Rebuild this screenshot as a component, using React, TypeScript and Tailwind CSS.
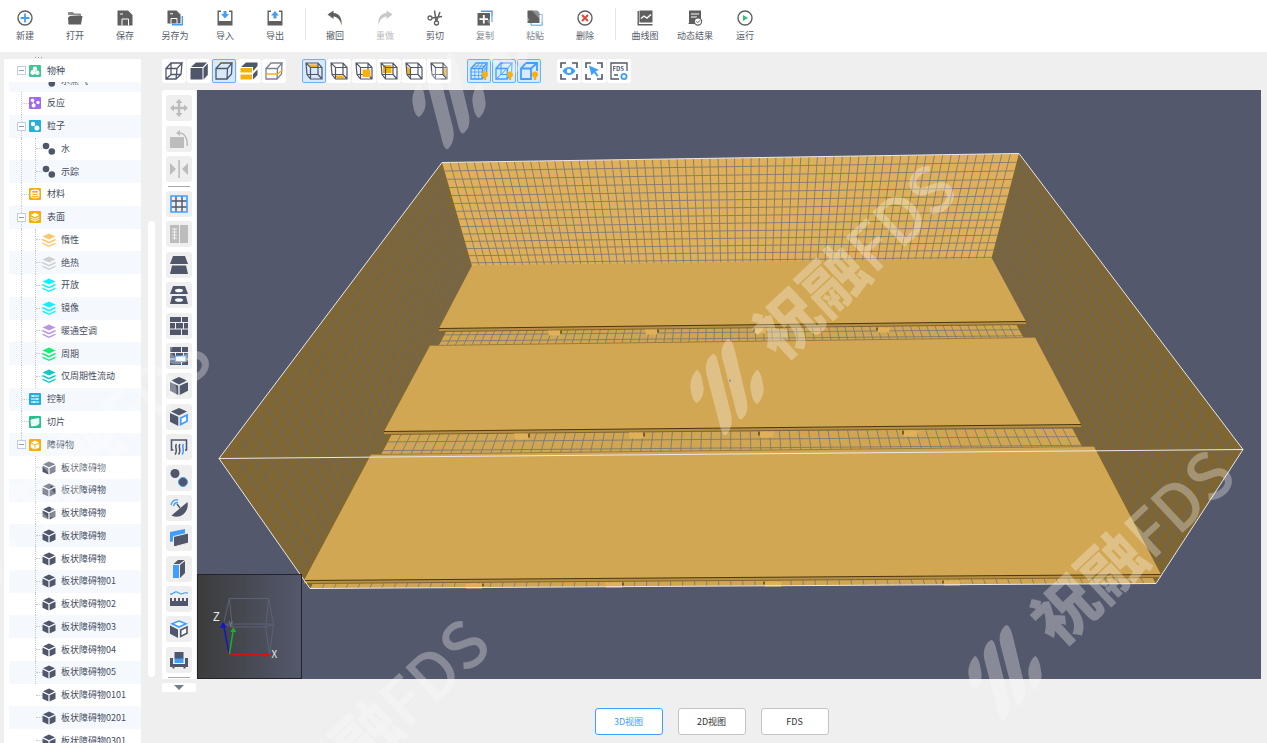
import { useState } from "react";
import type { ReactNode } from "react";
import clsx from "clsx";

const DARK = "#50576b";
const BLUE = "#409eff";
const AMBER = "#f8b10c";
const GREY = "#5f5f5f";
const MUTED = "#bcbcbc";

type Point = [number, number];
type Quad = [Point, Point, Point, Point];

function Icon({ size = 18, children }: { size?: number; children: ReactNode }) {
  return (
    <svg width={size} height={size} viewBox={`0 0 ${size} ${size}`} fill="none" aria-hidden="true" className="shrink-0">
      {children}
    </svg>
  );
}

/* ---------- top menu ---------- */

type MenuItem = { label: string; icon: ReactNode; disabled?: boolean };

const menuGroups: MenuItem[][] = [
  [
    {
      label: "新建",
      icon: (
        <>
          <circle cx="8" cy="8" r="7" stroke={GREY} strokeWidth="1.4" />
          <path d="M8 3.6v8.8M3.6 8h8.8" stroke={BLUE} strokeWidth="1.8" />
        </>
      ),
    },
    {
      label: "打开",
      icon: (
        <>
          <path d="M1.5 5V2.500h4.500L7.500 4h6v2" fill="#8a8a8a" stroke="#8a8a8a" />
          <path d="M3 6H15.500L14 14.500H1.500L1 7.500z" fill={GREY} />
        </>
      ),
    },
    {
      label: "保存",
      icon: (
        <>
          <path d="M0.5 0.5H11L15.5 5V15.5H0.5z" fill={GREY} />
          <path d="M5 15.5V9H11.5V15.5M3 4H6" stroke="#fff" strokeWidth="1" />
        </>
      ),
    },
    {
      label: "另存为",
      icon: (
        <>
          <path d="M5 14.8H15.3V6" stroke={BLUE} strokeWidth="1.4" />
          <path d="M0.5 0.5H9.5L13.5 4.5V13.5H0.5z" fill={GREY} />
          <path d="M4 13.5V8.5H10V13.5M3 3.8H6" stroke="#fff" strokeWidth="1" />
        </>
      ),
    },
    {
      label: "导入",
      icon: (
        <>
          <path d="M4 1.2H1.2V14.8H14.8V1.2H12" stroke={GREY} strokeWidth="1.4" />
          <path d="M1 11H15V15H1z" fill={GREY} />
          <path d="M6.500 1H9.5V4H12L8 8.5L4 4H6.5z" fill={BLUE} />
        </>
      ),
    },
    {
      label: "导出",
      icon: (
        <>
          <path d="M4 1.2H1.2V14.8H14.8V1.2H12" stroke={GREY} strokeWidth="1.4" />
          <path d="M1 11H15V15H1z" fill={GREY} />
          <path d="M6.5 8.5H9.5V5.5H12L8 1L4 5.5H6.5z" fill={BLUE} />
        </>
      ),
    },
  ],
  [
    { label: "撤回", icon: <path d="M0.5 4.5L6.5 0.5V3C12 3 15.5 8 14.5 15.5C13.5 10.5 11 7 6.5 6.5V9z" fill={GREY} /> },
    {
      label: "重做",
      disabled: true,
      icon: <path d="M15.5 4.5L9.5 0.5V3C4 3 0.5 8 1.5 15.5C2.5 10.5 5 7 9.5 6.5V9z" fill="#c8c8c8" />,
    },
    {
      label: "剪切",
      icon: (
        <>
          <circle cx="3" cy="8" r="2" stroke={GREY} strokeWidth="1.3" />
          <circle cx="9.5" cy="13" r="2" stroke={GREY} strokeWidth="1.3" />
          <path d="M5 8L15 6.500M9 11L7.500 0.5M9.5 11L13 2" stroke={GREY} strokeWidth="1.5" />
        </>
      ),
    },
    {
      label: "复制",
      icon: (
        <>
          <path d="M4 1.2H15V12" stroke={BLUE} strokeWidth="1.4" />
          <path d="M0.5 3H13V15.5H0.5z" fill={GREY} />
          <path d="M6.8 5V13.5M2.5 9.2H11" stroke="#fff" strokeWidth="1.8" />
        </>
      ),
    },
    {
      label: "粘贴",
      icon: (
        <>
          <path d="M4 4.5H15.2V15.2H4z" stroke={BLUE} strokeWidth="1" />
          <path d="M0.5 0.5H10L12.5 2.5V13H0.5z" fill={GREY} />
        </>
      ),
    },
    {
      label: "删除",
      icon: (
        <>
          <circle cx="8" cy="8" r="7" stroke={GREY} strokeWidth="1.4" />
          <path d="M5 5L11 11M11 5L5 11" stroke="#dd4b39" strokeWidth="2" />
        </>
      ),
    },
  ],
  [
    {
      label: "曲线图",
      icon: (
        <>
          <path d="M1.2 1V14.8H15.5" stroke={GREY} strokeWidth="1.4" />
          <path d="M2.5 0.5H15.5V12.5H2.5z" fill={GREY} />
          <path d="M4 8.500L7 6L10 8L14 4.500" stroke="#fff" strokeWidth="1.4" />
        </>
      ),
    },
    {
      label: "动态结果",
      icon: (
        <>
          <path d="M2 0.5H14V8L8 14H2z" fill={GREY} />
          <path d="M4 4H12M4 7H10" stroke="#fff" strokeWidth="1.2" />
          <circle cx="11" cy="11.5" r="3.6" fill="#fff" stroke={GREY} strokeWidth="1.2" />
          <path d="M9.3 11.5L10.7 12.8L13 10.3M1.5 13.5H5.5" stroke={GREY} strokeWidth="1" />
        </>
      ),
    },
    {
      label: "运行",
      icon: (
        <>
          <circle cx="8" cy="8" r="7" stroke={GREY} strokeWidth="1.4" />
          <path d="M6 5L11 8L6 11z" fill="#2fc56d" />
        </>
      ),
    },
  ],
];

function MenuBar() {
  return (
    <header className="flex h-[52px] shrink-0 bg-white">
      {menuGroups.map((group, index) => (
        <div key={index} className="flex">
          {index > 0 ? <span className="mt-2 mr-1 ml-[5px] h-8 w-px bg-[#e4e4e4]" /> : null}
          {group.map((item) => (
            <button
              key={item.label}
              type="button"
              disabled={item.disabled}
              className={clsx(
                "flex w-[50px] flex-col items-center gap-[3px] pt-[10px] text-[9px] leading-[14px] whitespace-nowrap",
                item.disabled ? "text-[#bdbdbd]" : "text-[#555a68]",
              )}
            >
              <Icon size={16}>{item.icon}</Icon>
              {item.label}
            </button>
          ))}
        </div>
      ))}
    </header>
  );
}

/* ---------- tree ---------- */

const layers = (color: string) => (
  <g fill={color}>
    <path d="M7 0.5L13.5 3.5L7 6.5L0.5 3.5z" />
    <path d="M0.5 5.800L7 8.800L13.5 5.800V7.600L7 10.600L0.5 7.600z" />
    <path d="M0.5 9.400L7 12.400L13.5 9.400V11L7 14L0.5 11z" />
  </g>
);

const block = (
  <g fill={DARK}>
    <path d="M7 0.5L13 3.3L7 6.2L1 3.3z" />
    <path d="M0.5 4.5L6.4 7.3V13.6L0.5 10.8z" />
    <path d="M13.5 4.5L7.6 7.3V13.6L13.5 10.8z" />
  </g>
);

const particles = (
  <g fill={DARK}>
    <circle cx="4" cy="4" r="3.3" />
    <circle cx="9.8" cy="9.5" r="3.3" />
  </g>
);

const badge = (color: string, mark: ReactNode) => (
  <>
    <rect width="12" height="12" rx="1" fill={color} />
    {mark}
  </>
);

const badges = {
  species: badge(
    "#3cc892",
    <g fill="#fff">
      <circle cx="6" cy="3.8" r="2.2" />
      <circle cx="3.8" cy="7.5" r="2.4" />
      <circle cx="8.3" cy="7.8" r="2.2" />
    </g>,
  ),
  reaction: badge(
    "#a168f0",
    <g fill="#fff">
      <circle cx="3.5" cy="3.3" r="1.8" />
      <circle cx="4.6" cy="8.5" r="2" />
      <circle cx="9" cy="5.5" r="1.7" />
      <path d="M3.5 3.500L5 8" stroke="#fff" />
    </g>,
  ),
  particle: badge(
    "#25aed6",
    <g fill="#fff">
      <circle cx="4" cy="4" r="2.2" />
      <circle cx="7.9" cy="8" r="2.5" />
    </g>,
  ),
  material: badge(
    "#f8ae07",
    <g stroke="#fff" strokeWidth="1.2">
      <ellipse cx="6" cy="3.7" rx="3.8" ry="1.6" />
      <path d="M2.200 3.7V8.500C3.5 10.500 8.5 10.500 9.800 8.5V3.7M2.200 6C4 8.300 8 8.300 9.800 6" />
    </g>,
  ),
  surface: badge(
    "#f8ae07",
    <g fill="#fff">
      <path d="M6 1.8L10.3 4L6 6.2L1.7 4z" />
      <path d="M1.7 6L6 8.2L10.3 6M1.7 8L6 10.2L10.3 8" stroke="#fff" fill="none" />
    </g>,
  ),
  control: badge("#25aed6", <path d="M2 3H10M2 6H10M2 9H10M4 2V4M8 5V7M5 8V10" stroke="#fff" strokeWidth="1.1" />),
  slice: badge("#27bf8a", <path d="M2 4L4 3.500L9.800 2.500V7.500L8.500 9L2.500 10z" fill="#e9fff6" stroke="#fff" />),
  obstacle: badge(
    "#f8ae07",
    <g fill="#fff">
      <path d="M6 1.5L10 3.5L6 5.5L2 3.5z" />
      <path d="M1.8 4.5L5.6 6.3V10.4L1.8 8.5zM10.2 4.5L6.4 6.3V10.4L10.2 8.5z" />
    </g>,
  ),
};

type TreeRow = { label: string; icon: ReactNode; child?: boolean; open?: boolean; trunk?: boolean; branch?: boolean };

const child = (label: string, icon: ReactNode, trunk = true, branch = true): TreeRow => ({
  label,
  icon,
  child: true,
  trunk,
  branch,
});

const treeRows: TreeRow[] = [
  { label: "反应", icon: badges.reaction, trunk: true },
  { label: "粒子", icon: badges.particle, open: true, trunk: true },
  child("水", particles),
  child("示踪", particles),
  { label: "材料", icon: badges.material, trunk: true },
  { label: "表面", icon: badges.surface, open: true, trunk: true },
  child("惰性", layers("#fcc76e")),
  child("绝热", layers("#cfcfcf")),
  child("开放", layers("#10f0ff")),
  child("镜像", layers("#10f0ff")),
  child("暖通空调", layers("#bd94e4")),
  child("周期", layers("#10f070")),
  child("仅周期性流动", layers("#12c8c8")),
  { label: "控制", icon: badges.control, trunk: true },
  { label: "切片", icon: badges.slice, trunk: true },
  { label: "障碍物", icon: badges.obstacle, open: true },
  ...["", "", "", "", "", "01", "02", "03", "04", "05"].map((n) => child(`板状障碍物${n}`, block, false)),
  ...["0101", "0201", "0301"].map((n) => child(`板状障碍物${n}`, block, false, false)),
];

function Toggle({ above = true, below }: { above?: boolean; below?: boolean }) {
  return (
    <span className="mr-[3px] ml-2 flex h-full w-[9px] flex-col items-center">
      <span className={clsx("flex-1 border-l border-dotted", above ? "border-[#c4c8d0]" : "border-transparent")} />
      <button type="button" aria-label="收起" className="flex size-[9px] items-center justify-center border border-[#c3cde0] bg-white">
        <span className="h-px w-[5px] bg-[#8f9bb5]" />
      </button>
      <span className={clsx("flex-1 border-l border-dotted", below ? "border-[#c4c8d0]" : "border-transparent")} />
    </span>
  );
}

function TreeItem({ row, index }: { row: TreeRow; index: number }) {
  const line = "border-[#c4c8d0]";

  return (
    <li className={clsx("flex items-center", index % 2 === 1 ? "bg-[#f5f9fe]" : "bg-white")}>
      {row.child ? (
        <>
          <span className={clsx("ml-3 h-full w-[14px] border-l border-dotted", row.trunk ? line : "border-transparent")} />
          <span className={clsx("flex h-full w-[7px] items-center border-l border-dotted", row.branch ? line : "border-transparent")}>
            <span className={clsx("w-full border-t border-dotted", line)} />
          </span>
        </>
      ) : row.open ? (
        <Toggle below={row.trunk} />
      ) : (
        <span className={clsx("ml-3 flex h-full w-2 items-center border-l border-dotted", line)}>
          <span className={clsx("w-full border-t border-dotted", line)} />
        </span>
      )}
      <Icon size={row.child ? 14 : 12}>{row.icon}</Icon>
      <a href="#" className={clsx("whitespace-nowrap", row.child ? "ml-[5px]" : "ml-[6px]")}>
        {row.label}
      </a>
    </li>
  );
}

function Sidebar() {
  return (
    <aside className="ml-1 flex w-[137px] shrink-0 flex-col">
      <div className="flex h-[7px] shrink-0 items-end gap-[2px] pb-px pl-[31px]">
        <span className="size-px bg-[#999]" />
        <span className="size-px bg-[#999]" />
        <span className="size-px bg-[#999]" />
      </div>
      <div className="flex min-h-0 flex-1 flex-col overflow-hidden bg-white pl-[5px] text-[9px] leading-[14px] text-[#454c60]">
        <div className="flex h-[23px] shrink-0 items-center">
          <Toggle above={false} />
          <Icon size={12}>{badges.species}</Icon>
          <span className="ml-[6px]">物种</span>
        </div>
        <div className="flex h-[10px] shrink-0 items-end overflow-hidden bg-[#f5f9fe] pl-[33px]">
          <div className="flex h-[23px] shrink-0 items-center gap-[5px]">
            <Icon size={14}>{particles}</Icon>
            <span>水蒸气</span>
          </div>
        </div>
        <ul className="grid h-[660px] shrink-0 auto-rows-fr">
          {treeRows.map((row, index) => (
            <TreeItem key={index} row={row} index={index} />
          ))}
        </ul>
      </div>
    </aside>
  );
}

/* ---------- view toolbar ---------- */

const wire = (
  <path
    d="M1 6.5H12L11 17H1zM1 6.5L6 1H17L12 6.5M17 1L16 12.5L11 17M6 1V12.5H16M6 12.5L1 17"
    stroke={DARK}
    strokeWidth="1.3"
  />
);
const shell = (color: string) => (
  <path d="M1 6.5H12.5L12 17H1zM1 6.5L6 1H17L12.5 6.5M17 1L16.500 12L12 17" stroke={color} strokeWidth="1.3" />
);
const frame = (
  <path
    d="M1 1H13L17 5.5V17H5.5L2 12.5zM1 1L5.5 5.5H17M5.5 5.5V17M13 1V12.5H2M13 12.5L17 17"
    stroke={DARK}
    strokeWidth="1.2"
  />
);
const bulb = (
  <g fill={AMBER}>
    <circle cx="15" cy="12.5" r="3" />
    <path d="M13.8 14H16.2V18H13.8z" />
  </g>
);
const brackets = <path d="M1 6V1H6M12 1H17V6M17 12V17H12M6 17H1V12" stroke={DARK} strokeWidth="1.6" />;

type ViewTool = { name: string; icon: ReactNode; active?: boolean };

const viewGroups: ViewTool[][] = [
  [
    { name: "线框", icon: wire },
    {
      name: "实体",
      icon: <path d="M0.5 6H12.5V17.5H0.5zM1 5L6 0.5H17L12.8 5zM13.5 6L17.8 1.5V13L13.5 17.5z" fill={DARK} />,
    },
    { name: "轮廓", icon: shell(DARK), active: true },
    {
      name: "切面",
      icon: (
        <>
          <path d="M1 5L6 0.5H17.5V4L13 9V5zM13 12L17.5 7.5V13L13 17.5z" fill={DARK} />
          <path d="M0.5 6H12V10.5H0.5zM0.5 12.5H12V17.5H0.5z" fill={AMBER} />
        </>
      ),
    },
    {
      name: "截面线",
      icon: (
        <>
          {shell("#7d8291")}
          <path d="M0.5 12H12.5L17.5 8" stroke={AMBER} strokeWidth="1.4" />
        </>
      ),
    },
  ],
  [
    { name: "顶视图", icon: <><path d="M3.5 2.5H12.5L14 5H6z" fill={AMBER} />{frame}</>, active: true },
    { name: "底视图", icon: <><path d="M5 13.5H12.5L15 16.5H7z" fill={AMBER} />{frame}</> },
    { name: "前视图", icon: <>{frame}<path d="M7.5 7.5H15.5V15H7.5z" fill={AMBER} /></> },
    { name: "后视图", icon: <><path d="M3 3H11.5V11H3z" fill={AMBER} />{frame}</> },
    { name: "左视图", icon: <><path d="M2 4L5 7V15L2.5 12z" fill={AMBER} />{frame}</> },
    { name: "右视图", icon: <><path d="M13.5 4L16.5 7V15L13.5 12z" fill={AMBER} />{frame}</> },
  ],
  [
    {
      name: "网格",
      active: true,
      icon: (
        <>
          {shell(BLUE)}
          <path
            d="M4.8 6.5V17M8.6 6.5V17M1 10H12.5L17 5M1 13.5H12.5M3 4H14.5M9.5 1L5 6.5M13 1L9 6.5M14.8 4V14"
            stroke={BLUE}
            strokeWidth="0.8"
          />
          {bulb}
        </>
      ),
    },
    {
      name: "网格线",
      active: true,
      icon: (
        <>
          {shell(BLUE)}
          <path d="M6 1V12.5L1 17M6 12.5L12 6.500M6 12.5H12" stroke={BLUE} strokeWidth="1" />
          {bulb}
        </>
      ),
    },
    {
      name: "边界",
      active: true,
      icon: (
        <>
          <path d="M1 6.5H11V17H1zM1 6.5L6 1H17L11 6.5M17 1V9" stroke={BLUE} strokeWidth="1.8" />
          {bulb}
        </>
      ),
    },
  ],
  [
    {
      name: "显示",
      icon: (
        <>
          {brackets}
          <path d="M2.500 9C6 3.500 12 3.500 15.500 9C12 14.500 6 14.500 2.500 9z" fill={BLUE} />
          <circle cx="9" cy="9" r="2.2" fill="#fff" />
        </>
      ),
    },
    {
      name: "选择",
      icon: (
        <>
          {brackets}
          <path d="M4 3.5L14 8L10.5 9.5L13.5 13.5L12 14.8L9 10.8L6.5 13.5z" fill={BLUE} />
        </>
      ),
    },
    {
      name: "FDS",
      icon: (
        <>
          <path d="M1 9V1H17V9M1 8V17H9M4 13H8" stroke={DARK} strokeWidth="1.3" />
          <text x="2.5" y="9" fontSize="6" fontWeight="700" fill={DARK}>
            FDS
          </text>
          <circle cx="14" cy="14.5" r="2.6" stroke={BLUE} strokeWidth="1.8" />
        </>
      ),
    },
  ],
];

function ViewToolbar() {
  return (
    <div className="flex h-6 shrink-0 gap-4">
      {viewGroups.map((group, index) => (
        <div key={index} className="flex gap-px">
          {group.map((tool) => (
            <button
              key={tool.name}
              type="button"
              aria-label={tool.name}
              aria-pressed={Boolean(tool.active)}
              className={clsx(
                "flex size-6 items-center justify-center rounded-[2px] border",
                tool.active ? "border-[#6bb0f7] bg-[#d8e9fb]" : "border-white bg-white",
              )}
            >
              <Icon>{tool.icon}</Icon>
            </button>
          ))}
        </div>
      ))}
    </div>
  );
}

/* ---------- drawing tools ---------- */

const bigCube = (
  <g fill={DARK}>
    <path d="M9 0L17 3.5L9 7.5L1 3.5z" />
    <path d="M0 5L8.3 8.8V18L0 13.8z" />
  </g>
);

const bricks = (
  <path
    d="M0 0H11V5H0zM12 0H18V5H12zM0 6H5V11.500H0zM6 6H13V11.500H6zM14 6H18V11.500H14zM0 12.500H11V18H0zM12 12.500H18V18H12z"
    fill={DARK}
  />
);

const editTools: ViewTool[] = [
  {
    name: "移动",
    icon: (
      <>
        <path d="M9 3V15M3 9H15" stroke={MUTED} strokeWidth="2.4" />
        <path d="M9 0L12.5 4H5.5zM9 18L5.5 14H12.5zM0 9L4 5.5V12.5zM18 9L14 12.5V5.5z" fill={MUTED} />
      </>
    ),
  },
  {
    name: "旋转",
    icon: (
      <>
        <rect y="7" width="14" height="11" rx="1" fill={MUTED} />
        <path d="M9 3C14 3 17.3 6 17.3 16" stroke={MUTED} strokeWidth="1.4" />
        <path d="M6 3L10 0V6z" fill={MUTED} />
      </>
    ),
  },
  { name: "镜像", icon: <path d="M0 3L6 9L0 15zM18 3L12 9L18 15zM8.3 0H9.9V18H8.3z" fill={MUTED} /> },
];

const drawTools: ViewTool[] = [
  {
    name: "网格",
    icon: (
      <>
        <path d="M6 1V17M12 1V17M1 6H17M1 12H17" stroke={DARK} strokeWidth="1.4" />
        <path d="M1 1H17V17H1z" stroke={BLUE} strokeWidth="1.6" />
      </>
    ),
  },
  {
    name: "分割",
    icon: (
      <>
        <path d="M0 0H9V18H0zM10 0H18V18H10z" fill={MUTED} />
        <path d="M4.5 3V15M2 4H7M2 7H7M2 10H7M2 13H7" stroke="#eee" />
      </>
    ),
  },
  { name: "通风口", icon: <path d="M3 0H15L18 8H0zM2 9.500H16L18 18H0z" fill={DARK} /> },
  {
    name: "开孔",
    icon: (
      <>
        <path d="M3 0H15L18 8H0zM2 10H16L18 18H0z" fill={DARK} />
        <ellipse cx="9" cy="4.5" rx="4" ry="1.8" fill="#fff" />
        <ellipse cx="9" cy="14" rx="4" ry="1.8" fill="#fff" />
      </>
    ),
  },
  { name: "墙体", icon: bricks },
  {
    name: "墙洞",
    icon: (
      <>
        {bricks}
        <path d="M5.5 9H16V14.5H5.5z" fill="#fff" stroke={BLUE} strokeWidth="1.2" />
      </>
    ),
  },
  {
    name: "障碍物",
    icon: (
      <>
        {bigCube}
        <path d="M18 5L9.7 8.8V18L18 13.8z" fill={DARK} />
      </>
    ),
  },
  {
    name: "孔洞",
    icon: (
      <>
        {bigCube}
        <path d="M17 7L10.7 10V16.5L17 13.3z" fill="#fff" stroke={BLUE} strokeWidth="1.8" />
      </>
    ),
  },
  {
    name: "暖通",
    icon: (
      <>
        <path d="M3.500 12H1.500V2H16.500V12H15" stroke={DARK} strokeWidth="1.6" />
        <path d="M6.500 6C4 9 8.500 12 5 16.500M10 6C7.500 9 12 12 8.500 16.500" stroke={DARK} strokeWidth="1.5" />
        <path d="M13.500 6C11 9 15.500 12 12 16.500" stroke={BLUE} strokeWidth="1.5" />
      </>
    ),
  },
  {
    name: "粒子",
    icon: (
      <>
        <circle cx="5" cy="4.5" r="4.5" fill={DARK} />
        <circle cx="13" cy="13" r="4.5" fill={DARK} stroke={BLUE} />
      </>
    ),
  },
  {
    name: "探测器",
    icon: (
      <>
        <path d="M1.5 16.500L17.500 3C19.5 13 10 21 1.5 16.500z" fill={DARK} />
        <path d="M7 5L10 9" stroke={DARK} strokeWidth="1.4" />
        <path d="M1 6C2 2 5 0.5 8 1M3.5 7C4 5 5.5 3.5 8 3.5" stroke={BLUE} strokeWidth="1.4" />
      </>
    ),
  },
  {
    name: "切片",
    icon: (
      <>
        <path d="M0 3L15 0V10L0 13z" fill={BLUE} />
        <path d="M3.5 7.5L18.5 4V14L3.5 18z" fill={DARK} stroke="#efefef" />
      </>
    ),
  },
  {
    name: "区域",
    icon: (
      <>
        <path d="M3 5H9V18H3z" fill={BLUE} />
        <path d="M3.5 4L8 0H14.5L9.5 4zM10 5L15 1V13L10 18z" fill={DARK} />
      </>
    ),
  },
  {
    name: "测量",
    icon: (
      <>
        <path d="M0 8H2V11H4V8H6V11H8V8H10V11H12V8H14V11H16V8H18V16H0z" fill={DARK} />
        <path d="M0 4C3 5 4 1 7 2C10 3 10 5 13 3.5C15 2 16 3 18 3" stroke={BLUE} strokeWidth="1.2" />
      </>
    ),
  },
  {
    name: "空间",
    icon: (
      <>
        <path d="M9 1L16 3.8L9 7L2 3.8z" fill="#fff" stroke={BLUE} strokeWidth="1.6" />
        <path d="M0 5.5L8 9.5V18L0 13.8z" fill={DARK} />
        <path d="M17 7L10.7 10V16.5L17 13.3z" fill="#fff" stroke={DARK} strokeWidth="1.6" />
      </>
    ),
  },
  {
    name: "家具",
    icon: (
      <>
        <path d="M4.500 1H13.500V8H4.500zM0 7H3V13H15V7H18V16H15.500V17.500H13.500V16H4.500V17.500H2.500V16H0z" fill={DARK} />
        <path d="M4.5 7.5H13.5V12H4.5z" fill={BLUE} />
      </>
    ),
  },
];

function ToolButton({ tool }: { tool: ViewTool }) {
  return (
    <button
      type="button"
      aria-label={tool.name}
      className="flex size-[26px] shrink-0 items-center justify-center rounded-[3px] bg-[#efefef]"
    >
      <Icon>{tool.icon}</Icon>
    </button>
  );
}

function DrawingTools() {
  return (
    <div className="flex w-[34px] shrink-0 flex-col">
      <div className="flex flex-1 flex-col items-center rounded-t-[3px] bg-white pt-[5px]">
        <div className="flex h-[87px] shrink-0 flex-col justify-between">
          {editTools.map((tool) => (
            <ToolButton key={tool.name} tool={tool} />
          ))}
        </div>
        <span className="my-1 h-px w-[22px] shrink-0 bg-[#a9a9a9]" />
        <div className="flex flex-1 flex-col justify-between">
          {drawTools.map((tool) => (
            <ToolButton key={tool.name} tool={tool} />
          ))}
        </div>
        <span className="mt-1 mb-px h-px w-[22px] shrink-0 bg-[#a9a9a9]" />
      </div>
      <button
        type="button"
        aria-label="更多工具"
        className="mt-1 flex h-[9px] shrink-0 items-center justify-center rounded-[2px] bg-white"
      >
        <svg width="10" height="5" viewBox="0 0 10 5" aria-hidden="true">
          <path d="M0 0H10L5 5z" fill="#777d8c" />
        </svg>
      </button>
    </div>
  );
}

/* ---------- 3D view ---------- */

const BACK_LEFT: Point = [442, 162];
const BACK_RIGHT: Point = [1019, 153];
const FRONT_RIGHT: Point = [1243, 449];
const FRONT_LEFT: Point = [219, 458];
const FLOOR_BACK_LEFT: Point = [475, 276];
const FLOOR_BACK_RIGHT: Point = [988, 271];
const FLOOR_FRONT_RIGHT: Point = [1156, 583];
const FLOOR_FRONT_LEFT: Point = [310, 588];

const toPoints = (points: Point[]) => points.map((p) => p.join(",")).join(" ");

// Projective map from the unit square onto a quad
function project([p0, p1, p2, p3]: Quad) {
  const dx1 = p1[0] - p2[0];
  const dy1 = p1[1] - p2[1];
  const dx2 = p3[0] - p2[0];
  const dy2 = p3[1] - p2[1];
  const sx = p0[0] - p1[0] + p2[0] - p3[0];
  const sy = p0[1] - p1[1] + p2[1] - p3[1];
  const det = dx1 * dy2 - dx2 * dy1;
  const g = (sx * dy2 - dx2 * sy) / det;
  const h = (dx1 * sy - sx * dy1) / det;
  const a = p1[0] - p0[0] + g * p1[0];
  const b = p3[0] - p0[0] + h * p3[0];
  const d = p1[1] - p0[1] + g * p1[1];
  const e = p3[1] - p0[1] + h * p3[1];

  return (u: number, v: number): Point => {
    const w = g * u + h * v + 1;
    return [(a * u + b * v + p0[0]) / w, (d * u + e * v + p0[1]) / w];
  };
}

function gridPath(quad: Quad, columns: number, rows: number) {
  const at = project(quad);
  const segment = (from: Point, to: Point) =>
    `M${from[0].toFixed(1)} ${from[1].toFixed(1)}L${to[0].toFixed(1)} ${to[1].toFixed(1)}`;
  const parts: string[] = [];
  for (let i = 1; i < columns; i++) parts.push(segment(at(i / columns, 0), at(i / columns, 1)));
  for (let j = 1; j < rows; j++) parts.push(segment(at(0, j / rows), at(1, j / rows)));
  return parts.join("");
}

const faces: { quad: Quad; fill: string; line: string; columns: number; rows: number }[] = [
  {
    quad: [FLOOR_BACK_LEFT, FLOOR_BACK_RIGHT, FLOOR_FRONT_RIGHT, FLOOR_FRONT_LEFT],
    fill: "#d0a652",
    line: "#7c7a76",
    columns: 70,
    rows: 40,
  },
  {
    quad: [BACK_LEFT, FRONT_LEFT, FLOOR_FRONT_LEFT, FLOOR_BACK_LEFT],
    fill: "#806631",
    line: "#68666c",
    columns: 40,
    rows: 14,
  },
  {
    quad: [BACK_RIGHT, FRONT_RIGHT, FLOOR_FRONT_RIGHT, FLOOR_BACK_RIGHT],
    fill: "#7f6530",
    line: "#68666c",
    columns: 40,
    rows: 14,
  },
  {
    quad: [BACK_LEFT, BACK_RIGHT, FLOOR_BACK_RIGHT, FLOOR_BACK_LEFT],
    fill: "#dfb059",
    line: "#7d7a76",
    columns: 70,
    rows: 15,
  },
];

const slabs: Quad[] = [
  [[472, 265], [992, 258], [1026, 321], [439, 328]],
  [[430, 345], [1035, 337], [1081, 424], [384, 431]],
  [[371, 454], [1094, 446], [1161, 574], [304, 580]],
];

const feet = [
  { y: 330, width: 13, height: 5, xs: [548, 645, 754, 877] },
  { y: 433, width: 15, height: 6, xs: [514, 629, 759, 903] },
  { y: 583, width: 18, height: 5, xs: [465, 605, 764, 943] },
];

function Scene() {
  return (
    <svg viewBox="197 90 1064 588" className="h-full w-full" role="img" aria-label="3D视图">
      {faces.map((face, index) => (
        <g key={index}>
          <polygon points={toPoints(face.quad)} fill={face.fill} />
          <path d={gridPath(face.quad, face.columns, face.rows)} stroke={face.line} strokeWidth="0.9" fill="none" />
        </g>
      ))}
      {slabs.map((slab, index) => {
        const [, , right, left] = slab;
        return (
          <g key={index}>
            <polygon points={toPoints(slab)} fill="#d1a753" />
            <polygon points={toPoints([left, right, [right[0], right[1] + 3], [left[0], left[1] + 3]])} fill="#b58f44" />
            <path d={`M${left[0]} ${left[1]}L${right[0]} ${right[1]}`} stroke="#4b380f" />
            <path d={`M${left[0]} ${left[1] + 3}L${right[0]} ${right[1] + 3}`} stroke="#80652e" />
            {index > 0 ? <path d={`M${slab[0].join(" ")}L${slab[1].join(" ")}`} stroke="#9c7b3c" /> : null}
          </g>
        );
      })}
      {feet.map((row) =>
        row.xs.map((x, index) => {
          const y = row.y - index;
          return (
            <g key={`${row.y}-${x}`}>
              <path d={`M${x} ${y}h${row.width}l-1 ${row.height}h${2 - row.width}z`} fill="#e0b159" />
              <path
                d={index < 2 ? `M${x + row.width} ${y}v${row.height - 2}` : `M${x} ${y}v${row.height - 2}`}
                stroke="#5a4414"
                strokeWidth="1.5"
              />
            </g>
          );
        }),
      )}
      <g stroke="#e8e8ea" fill="none">
        <polygon points={toPoints([BACK_LEFT, BACK_RIGHT, FRONT_RIGHT, FRONT_LEFT])} />
        <polyline points={toPoints([FRONT_LEFT, FLOOR_FRONT_LEFT, FLOOR_FRONT_RIGHT, FRONT_RIGHT])} />
      </g>
      <path d="M729 380h2" stroke="#6a5aa8" strokeWidth="2" />
    </svg>
  );
}

function AxisGizmo() {
  return (
    <svg
      viewBox="0 0 105 105"
      aria-hidden="true"
      className="absolute bottom-0 left-0 size-[105px] border border-[#23242a] bg-linear-to-r from-[#3c3c3c] to-[#54586c]"
    >
      <path
        d="M32 24H72L77 50H26zM26 50L35 53H69L77 50M32 24L35 53M72 24L69 53L73 81L77 50"
        stroke="#5d6175"
        fill="none"
      />
      <path d="M32 81L26 51" stroke="#1414c8" strokeWidth="1.5" />
      <path d="M22 54L26 48L29 53z" fill="#1414c8" />
      <path d="M32 81L36 56" stroke="#14b428" strokeWidth="1.5" />
      <path d="M33 58L36 53L39 58z" fill="#14b428" />
      <path d="M32 81H69" stroke="#d21414" strokeWidth="1.5" />
      <path d="M68 79L74 81L68 84z" fill="#d21414" />
      <g fill="#e8e8e8">
        <text x="15" y="47" fontSize="12">Z</text>
        <text x="31" y="53" fontSize="8" fill="#8a8a90">Y</text>
        <text x="75" y="85" fontSize="10">X</text>
      </g>
    </svg>
  );
}

/* ---------- watermark ---------- */

const watermarkOffsets: Point[] = [
  [-278, -286],
  [0, 0],
  [278, 286],
  [-467, 455],
  [-745, 169],
];

function Watermark() {
  return (
    <svg className="pointer-events-none absolute inset-0 h-full w-full" aria-hidden="true" fill="#fff" opacity="0.3">
      {watermarkOffsets.map(([x, y]) => (
        <g key={`${x},${y}`} transform={`translate(${x} ${y})`}>
          <path d="M697 370C692 374 689 384 691 391C692 398 694 402 697 403C702 400 705 391 703 385C702 377 700 371 697 370z" />
          <path d="M713 354C707 357 704 366 707 376L719 422C721 431 723 436 726 435C731 430 733 423 731 414L719 366C717 358 716 354 713 354z" />
          <path d="M728 339C722 344 720 351 723 361L735 407C737 416 739 421 742 419C747 415 749 408 746 397L735 351C733 343 731 339 728 339z" />
          <path d="M757 370C752 374 749 384 751 391C752 398 754 403 757 404C762 400 765 391 763 385C762 377 760 371 757 370z" />
          <text x="780" y="363" fontSize="64" fontWeight="900" transform="rotate(-43 780 363)">
            祝融<tspan fontWeight="500">FDS</tspan>
          </text>
        </g>
      ))}
    </svg>
  );
}

const viewTabs = ["3D视图", "2D视图", "FDS"];

export default function App() {
  const [activeTab, setActiveTab] = useState("3D视图");

  return (
    <div className="relative flex h-screen flex-col overflow-hidden bg-[#efefef] font-['Noto_Sans_CJK_SC','Noto_Sans',sans-serif]">
      <MenuBar />
      <div className="flex min-h-0 flex-1">
        <Sidebar />
        <div className="mx-[7px] mt-[169px] mb-[66px] w-[7px] shrink-0 rounded-full bg-white" />
        <main className="mr-[6px] flex min-w-0 flex-1 flex-col pt-[7px]">
          <ViewToolbar />
          <div className="mt-[7px] flex min-h-0 flex-1">
            <DrawingTools />
            <section className="relative mb-[13px] ml-px min-w-0 flex-1 bg-[#54586c]">
              <Scene />
              <AxisGizmo />
            </section>
          </div>
          <div className="flex h-[51px] shrink-0 justify-center gap-[15px] pt-4">
            {viewTabs.map((tab) => (
              <button
                key={tab}
                type="button"
                onClick={() => setActiveTab(tab)}
                className={clsx(
                  "h-[27px] w-[68px] rounded-[3px] border bg-white text-[9px] leading-[14px]",
                  tab === activeTab ? "border-[#409eff] text-[#409eff]" : "border-[#c4c4c4] text-[#333]",
                )}
              >
                {tab}
              </button>
            ))}
          </div>
        </main>
      </div>
      <Watermark />
    </div>
  );
}
